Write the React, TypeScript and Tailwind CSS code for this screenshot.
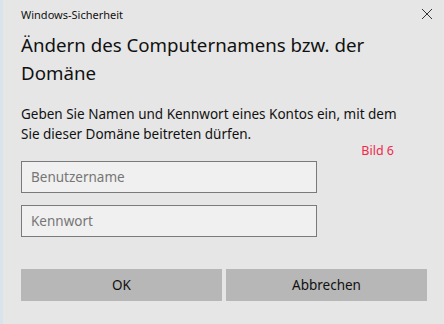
export default function App() {
  return (
    <div
      className="w-[444px] h-[324px] bg-[#e6e6e6] border-l-[3px] border-[#d8e4ea] text-[#000] overflow-hidden"
      style={{ fontFamily: '"Segoe UI", "Noto Sans", "Open Sans", sans-serif' }}
    >
      {/* Title bar */}
      <div className="flex items-center justify-between pl-[18px] pr-[10px] h-[28px]">
        <span className="text-[11px] leading-none text-[#111]">Windows-Sicherheit</span>
        <svg width="12" height="12" viewBox="0 0 12 12" className="mr-[1px]">
          <path d="M1 1 L11 11 M11 1 L1 11" stroke="#333" strokeWidth="1" />
        </svg>
      </div>

      {/* Heading */}
      <div className="pl-[18px] pr-[20px] pt-[3px]">
        <h1 className="text-[18.7px] leading-[28px] font-normal text-[#111]">
          Ändern des Computernamens bzw. der Domäne
        </h1>
      </div>

      {/* Body */}
      <div className="pl-[18px] pr-[20px] mt-[17px]">
        <p className="w-[394px] text-[13.5px] leading-[20px] text-[#111]">
          Geben Sie Namen und Kennwort eines Kontos ein, mit dem Sie dieser Domäne beitreten dürfen.
        </p>
        <div className="flex justify-end pr-[30px] h-[14px]">
          <span className="text-[12.5px] leading-[14px] text-[#f0284a]">Bild 6</span>
        </div>
        <div className="flex flex-col gap-[12px] mt-[3px]">
          <div className="w-[296px] h-[32px] border border-[#7a7a7a] bg-[#f0f0f0] flex items-center px-[9px]">
            <span className="text-[13.5px] text-[#767676]">Benutzername</span>
          </div>
          <div className="w-[296px] h-[32px] border border-[#7a7a7a] bg-[#f0f0f0] flex items-center px-[9px]">
            <span className="text-[13.5px] text-[#767676]">Kennwort</span>
          </div>
        </div>
      </div>

      {/* Buttons */}
      <div className="pl-[18px] pr-[17px] mt-[32px] flex gap-[4px]">
        <button className="flex-1 h-[32px] bg-[#b7b7b7] text-[13.5px] text-[#111]">OK</button>
        <button className="flex-1 h-[32px] bg-[#b7b7b7] text-[13.5px] text-[#111]">Abbrechen</button>
      </div>
    </div>
  );
}
